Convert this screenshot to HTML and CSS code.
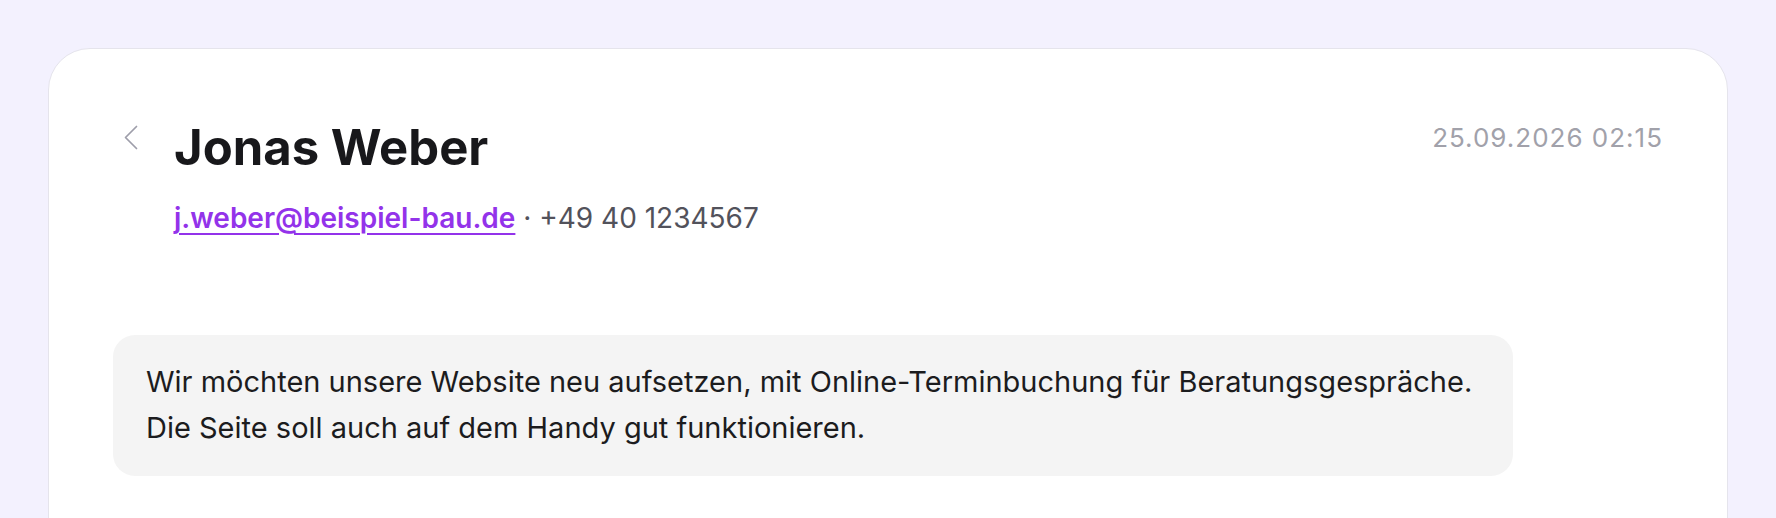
FILE: index.html
```html
<!DOCTYPE html>
<html lang="de">
<head>
<meta charset="utf-8">
<title>Jonas Weber</title>
<link rel="stylesheet" href="styles.css">
</head>
<body>
<main class="card">
  <header class="head">
    <div class="who">
      <button class="back" aria-label="Zurück">
        <svg width="16" height="26" viewBox="0 0 16 26" fill="none" stroke="currentColor" stroke-width="1.7" stroke-linecap="round" stroke-linejoin="round"><polyline points="13.5,1.5 2.5,12.5 13.5,23.5"/></svg>
      </button>
      <div class="ident">
        <h1 class="name">Jonas Weber</h1>
        <p class="contact"><a class="mail" href="#">j.weber@beispiel-bau.de</a><span class="sep"> · </span><span class="phone">+49 40 1234567</span></p>
      </div>
    </div>
    <time class="date">25.09.2026 02:15</time>
  </header>
  <div class="bubble">
    <p>Wir möchten unsere Website neu aufsetzen, mit Online-Terminbuchung für Beratungsgespräche.<br>Die Seite soll auch auf dem Handy gut funktionieren.</p>
  </div>
</main>
</body>
</html>
```
FILE: styles.css
```css
* { box-sizing: border-box; }
html, body { margin: 0; padding: 0; }
body {
  background: #f3f1fe;
  font-family: Inter, "Noto Sans", sans-serif;
  padding: 48px 48px 0;
  height: 518px;
  overflow: hidden;
}
.card {
  background: #fff;
  border: 1px solid #e5e4ec;
  border-radius: 42px;
  padding: 71px 64px 64px;
  min-height: 600px;
}
.head {
  display: flex;
  justify-content: space-between;
  align-items: flex-start;
}
.who {
  display: flex;
  align-items: flex-start;
  gap: 13px;
}
.back {
  width: 48px;
  height: 40px;
  padding: 0 0 0 10px;
  margin-top: 5px;
  border: 0;
  background: none;
  color: #9e9eaa;
  display: flex;
  align-items: flex-start;
  cursor: pointer;
}
.name {
  margin: 0;
  font-size: 49px;
  line-height: 56px;
  font-weight: 700;
  color: #18181b;
  letter-spacing: 0;
}
.contact {
  margin: 21px 0 0;
  font-size: 28px;
  line-height: 42px;
  color: #52525b;
}
.mail {
  color: #9333ea;
  font-weight: 600;
  text-decoration: underline;
  text-decoration-thickness: 2px;
  text-underline-offset: 5px;
}
.date {
  font-size: 26px;
  line-height: 36px;
  letter-spacing: 1px;
  color: #a1a1aa;
}
.bubble {
  margin-top: 96px;
  max-width: 1400px;
  background: #f4f4f4;
  border-radius: 22px;
  padding: 24px 33px 25px;
}
.bubble p {
  margin: 0;
  font-size: 29px;
  line-height: 46px;
  color: #1c1c1e;
}
```
